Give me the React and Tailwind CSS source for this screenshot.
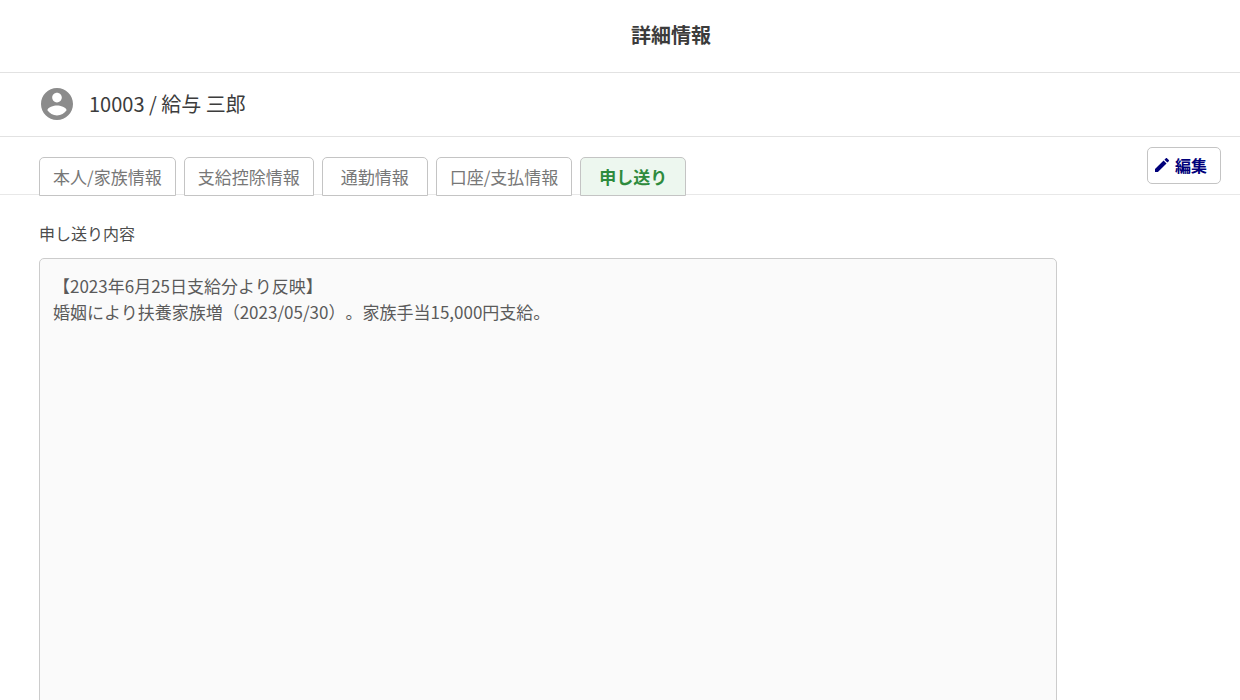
import { useState } from 'react';

const TABS = [
  { id: 'family', label: '本人/家族情報' },
  { id: 'salary', label: '支給控除情報' },
  { id: 'commute', label: '通勤情報' },
  { id: 'account', label: '口座/支払情報' },
  { id: 'memo', label: '申し送り' },
];

const MEMO = `【2023年6月25日支給分より反映】
婚姻により扶養家族増（2023/05/30）。家族手当15,000円支給。`;

function AccountIcon() {
  return (
    <svg viewBox="2 2 20 20" className="size-8 text-[#8b8b8b]" fill="currentColor" aria-hidden="true">
      <path d="M12 2C6.48 2 2 6.48 2 12s4.48 10 10 10 10-4.48 10-10S17.52 2 12 2zm0 3c1.66 0 3 1.34 3 3s-1.34 3-3 3-3-1.34-3-3 1.34-3 3-3zm0 14.2c-2.5 0-4.71-1.28-6-3.22.03-1.99 4-3.08 6-3.08 1.99 0 5.97 1.09 6 3.08-1.29 1.94-3.5 3.22-6 3.22z" />
    </svg>
  );
}

function PencilIcon() {
  return (
    <svg viewBox="3 3 18 18" className="size-[14px]" fill="currentColor" aria-hidden="true">
      <path d="M3 17.25V21h3.75L17.81 9.94l-3.75-3.75L3 17.25zM20.71 7.04c.39-.39.39-1.02 0-1.41l-2.34-2.34c-.39-.39-1.02-.39-1.41 0l-1.83 1.83 3.75 3.75 1.83-1.83z" />
    </svg>
  );
}

export default function App() {
  const [active, setActive] = useState('memo');

  return (
    <div className="min-h-screen bg-white font-['Noto_Sans_CJK_JP',sans-serif] text-[#3c3c3c]">
      <header className="flex h-[73px] items-center justify-center border-b border-[#e2e2e2] pb-[2px] pl-[102px]">
        <h1 className="text-[20px] font-bold">詳細情報</h1>
      </header>

      {/* Employee */}
      <div className="flex h-16 items-center gap-4 border-b border-[#e2e2e2] px-[41px] pb-[2px]">
        <AccountIcon />
        <p className="text-[20px]">10003 / 給与 三郎</p>
      </div>

      {/* Tabs overlap the rule below them */}
      <div className="flex h-[58px] items-start justify-between border-b border-[#e8e8e8] pr-[19px] pl-[39px]">
        <nav className="flex gap-2 pt-5">
          {TABS.map((tab) => (
            <button
              key={tab.id}
              type="button"
              onClick={() => setActive(tab.id)}
              className={`h-[39px] min-w-[106px] rounded-t-[5px] border border-[#c4c4c4] px-[13px] text-[17px] ${
                active === tab.id ? 'bg-[#edf7ef] font-bold text-[#2e8b3d]' : 'bg-white text-[#777777]'
              }`}
            >
              {tab.label}
            </button>
          ))}
        </nav>
        <button
          type="button"
          className="mt-[10px] flex h-[37px] items-center gap-[6px] rounded-[5px] border border-[#c4c4c4] pr-[13px] pb-[2px] pl-[7px] text-[16px] font-bold text-[#00007a]"
        >
          <PencilIcon />
          編集
        </button>
      </div>

      <main className="px-[39px] pt-[26px]">
        <label htmlFor="memo" className="block text-[16px] leading-6 text-[#4c4c4c]">
          申し送り内容
        </label>
        <textarea
          id="memo"
          rows={20}
          readOnly
          value={MEMO}
          className="mt-[13px] block w-full max-w-[1018px] resize-none rounded-[5px] border border-[#cccccc] bg-[#fafafa] px-[13px] py-[14px] text-[17px] leading-[26px] text-[#5a5a5a] outline-none [text-spacing-trim:space-all]"
        />
      </main>
    </div>
  );
}
